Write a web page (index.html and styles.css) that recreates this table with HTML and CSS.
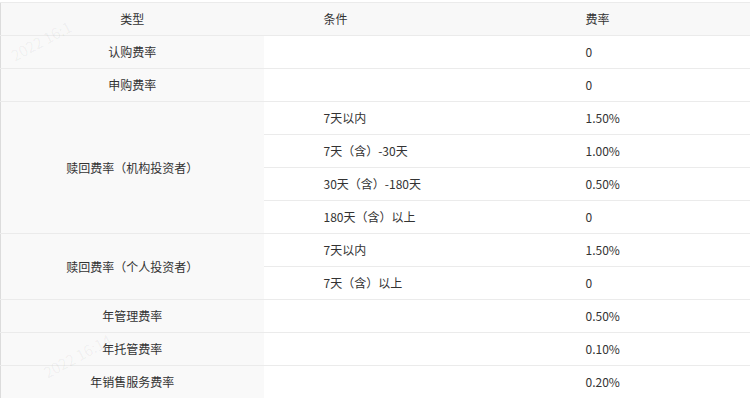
FILE: index.html
```html
<!DOCTYPE html>
<html lang="zh">
<head>
<meta charset="utf-8">
<link rel="stylesheet" href="styles.css">
</head>
<body>
<div class="wrap">
<table class="fee">
<colgroup><col class="w-type"><col class="w-cond"><col class="w-rate"></colgroup>
<thead>
<tr><th class="c-type">类型</th><th class="c-cond">条件</th><th class="c-rate">费率</th></tr>
</thead>
<tbody>
<tr><td class="c-type">认购费率</td><td class="c-cond"></td><td class="c-rate">0</td></tr>
<tr><td class="c-type">申购费率</td><td class="c-cond"></td><td class="c-rate">0</td></tr>
<tr><td class="c-type" rowspan="4">赎回费率（机构投资者）</td><td class="c-cond">7天以内</td><td class="c-rate">1.50%</td></tr>
<tr><td class="c-cond">7天（含）-30天</td><td class="c-rate">1.00%</td></tr>
<tr><td class="c-cond">30天（含）-180天</td><td class="c-rate">0.50%</td></tr>
<tr><td class="c-cond">180天（含）以上</td><td class="c-rate">0</td></tr>
<tr><td class="c-type" rowspan="2">赎回费率（个人投资者）</td><td class="c-cond">7天以内</td><td class="c-rate">1.50%</td></tr>
<tr><td class="c-cond">7天（含）以上</td><td class="c-rate">0</td></tr>
<tr><td class="c-type">年管理费率</td><td class="c-cond"></td><td class="c-rate">0.50%</td></tr>
<tr><td class="c-type">年托管费率</td><td class="c-cond"></td><td class="c-rate">0.10%</td></tr>
<tr><td class="c-type">年销售服务费率</td><td class="c-cond"></td><td class="c-rate">0.20%</td></tr>
</tbody>
</table>
<div class="wm wm1">2022 16:1</div>
<div class="wm wm2">2022 16:14</div>
</div>
</body>
</html>
```
FILE: styles.css
```css
html, body {
  margin: 0;
  padding: 0;
  background: #fff;
}
body {
  font-family: "Noto Sans CJK SC", "Noto Sans", sans-serif;
  font-size: 12px;
  color: #333;
}
.wrap {
  position: relative;
  padding-top: 2px;
  overflow: hidden;
  height: 398px;
  box-sizing: border-box;
}
.fee {
  width: 750px;
  border-collapse: collapse;
  table-layout: fixed;
  border-left: 1px solid #dcdcdc;
}
.w-type { width: 263px; }
.w-cond { width: 262px; }
.w-rate { width: 225px; }
.fee th, .fee td {
  box-sizing: border-box;
  height: 33px;
  padding: 0;
  border-top: 1px solid #ebebeb;
  font-weight: normal;
  line-height: 32px;
  vertical-align: middle;
}
.fee thead th {
  background: #f8f8f8;
}
.c-type {
  text-align: center;
  background: #f9f9f9;
}
.fee .c-cond {
  text-align: left;
  padding-left: 60px;
}
.fee .c-rate {
  text-align: left;
  padding-left: 60px;
}
.wm {
  position: absolute;
  color: rgba(0, 0, 0, 0.05);
  font-size: 15px;
  transform: rotate(-28deg);
  white-space: nowrap;
  pointer-events: none;
}
.wm1 { left: 8px; top: 30px; }
.wm2 { left: 40px; top: 345px; }
```
